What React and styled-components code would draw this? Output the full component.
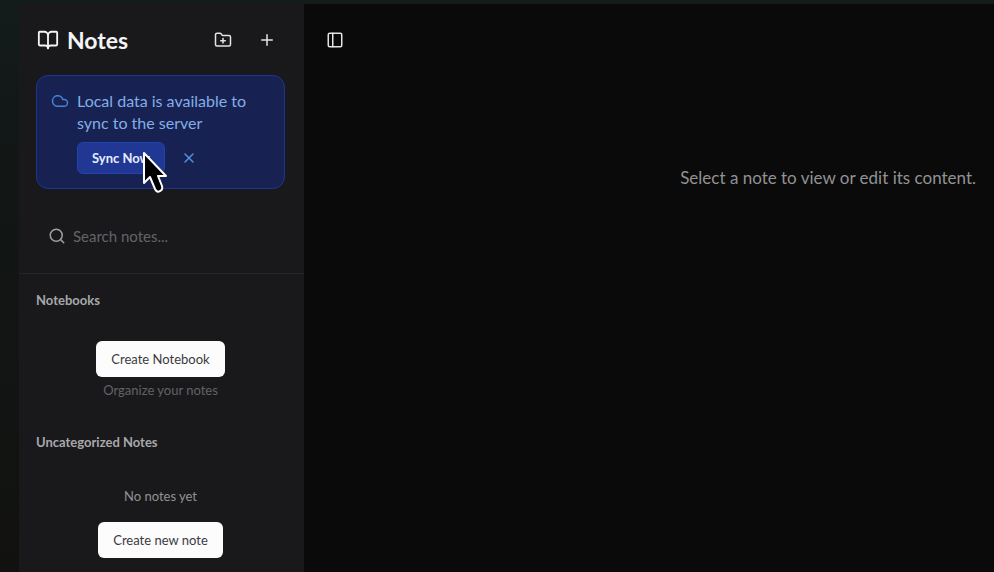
import React from "react";
import styled, { createGlobalStyle } from "styled-components";
import { BookOpen, Cloud, FolderPlus, PanelLeft, Plus, Search, X } from "lucide-react";

const GlobalStyle = createGlobalStyle`
  * {
    box-sizing: border-box;
  }

  body {
    margin: 0;
    background: #121615;
    font-family: Lato, "Liberation Sans", sans-serif;
    color: #f4f4f5;
  }

  button,
  input {
    font-family: inherit;
  }
`;

// --- Page frame ---
const Page = styled.div`
  display: flex;
  min-height: 100vh;
  padding: 4px 0 0 19px;
  background: linear-gradient(180deg, #131b1b 0%, #121615 35%, #111210 100%);
`;

const Sidebar = styled.aside`
  display: flex;
  flex-direction: column;
  flex: 0 0 285px;
  background: #19191b;
`;

const Main = styled.main`
  flex: 1;
  min-width: 0;
  background: #0a0a0a;
`;

// --- Sidebar header ---
const Header = styled.header`
  display: flex;
  align-items: center;
  justify-content: space-between;
  height: 71px;
  padding: 0 21px 0 18px;
`;

const Title = styled.h1`
  display: flex;
  align-items: center;
  gap: 8px;
  margin: 0;
  font-size: 23px;
  line-height: 28px;
  font-weight: 700;
`;

const Actions = styled.div`
  display: flex;
  gap: 12px;
`;

const IconButton = styled.button`
  display: flex;
  align-items: center;
  justify-content: center;
  width: 32px;
  height: 32px;
  padding: 0;
  border: 0;
  border-radius: 6px;
  background: transparent;
  color: ${({ $color }) => $color || "#e4e4e7"};
`;

// --- Sync banner ---
const Banner = styled.section`
  display: flex;
  align-items: flex-start;
  gap: 8px;
  margin: 0 19px 0 17px;
  padding: 14px;
  border: 1px solid #1e3590;
  border-radius: 12px;
  background: #172252;
  color: #4584d6;

  > svg {
    flex: none;
    margin-top: 2px;
  }
`;

const BannerText = styled.p`
  margin: 0;
  font-size: 16px;
  line-height: 22px;
  color: #83aee6;
`;

const BannerActions = styled.div`
  display: flex;
  align-items: center;
  gap: 8px;
  margin-top: 8px;
`;

const SyncButton = styled.button`
  position: relative;
  height: 32px;
  padding: 0 14px;
  border: 1px solid #2143ac;
  border-radius: 6px;
  background: #213794;
  color: #e6eefc;
  font-size: 13px;
  font-weight: 700;
`;

const Pointer = styled.svg`
  position: absolute;
  top: 5px;
  left: 61px;
  overflow: visible;
  pointer-events: none;
`;

// --- Search ---
const SearchBox = styled.label`
  display: flex;
  align-items: center;
  gap: 7px;
  height: 85px;
  padding: 10px 19px 0 29px;
  border-bottom: 1px solid #252527;
  color: #a1a1a5;
`;

const SearchInput = styled.input`
  flex: 1;
  min-width: 0;
  padding: 0;
  border: 0;
  outline: 0;
  background: transparent;
  color: #e4e4e7;
  font-size: 15px;
  line-height: 20px;

  &::placeholder {
    color: #646468;
    opacity: 1;
  }
`;

// --- Note groups ---
const Group = styled.section`
  padding: 17px 19px 0 17px;
`;

const GroupTitle = styled.h2`
  margin: 0;
  font-size: 13px;
  line-height: 18px;
  font-weight: 700;
  color: #a8a8ac;
`;

const GroupBody = styled.div`
  display: flex;
  flex-direction: column;
  align-items: center;
  gap: ${({ $gap }) => $gap};
  padding: ${({ $top }) => $top} 0 16px;
`;

const LightButton = styled.button`
  height: 36px;
  padding: 0 15px;
  border: 0;
  border-radius: 6px;
  background: #fcfcfd;
  color: #3a3a3d;
  font-size: 13px;
`;

const Hint = styled.p`
  margin: 0;
  font-size: 13px;
  line-height: 20px;
  color: ${({ $bright }) => ($bright ? "#929296" : "#626266")};
`;

// --- Main pane ---
const Toolbar = styled.div`
  display: flex;
  align-items: center;
  height: 71px;
  padding: 0 15px;
`;

const EmptyMessage = styled.p`
  margin: 0;
  padding: 91px 18px 0;
  font-size: 17px;
  line-height: 24px;
  text-align: right;
  color: #929294;
`;

export default function App() {
  return (
    <>
      <GlobalStyle />
      <Page>
        <Sidebar>
          <Header>
            <Title>
              <BookOpen size={22} strokeWidth={2} />
              Notes
            </Title>
            <Actions>
              <IconButton aria-label="New notebook">
                <FolderPlus size={18} />
              </IconButton>
              <IconButton aria-label="New note">
                <Plus size={18} />
              </IconButton>
            </Actions>
          </Header>

          <Banner>
            <Cloud size={18} />
            <div>
              <BannerText>Local data is available to sync to the server</BannerText>
              <BannerActions>
                <SyncButton>
                  Sync Now
                  <Pointer width="28" height="44" viewBox="0 0 28 44" aria-hidden="true">
                    <path
                      d="M5 5 V35 L11 29 L16 41 Q18 45 21 43 Q24 42 23 38 L19 28 H27 Z"
                      fill="#000"
                      stroke="#fff"
                      strokeWidth="2"
                      strokeLinejoin="round"
                    />
                  </Pointer>
                </SyncButton>
                <IconButton aria-label="Dismiss" $color="#5593df">
                  <X size={16} />
                </IconButton>
              </BannerActions>
            </div>
          </Banner>

          <SearchBox>
            <Search size={18} />
            <SearchInput type="text" placeholder="Search notes..." aria-label="Search notes" />
          </SearchBox>

          <Group>
            <GroupTitle>Notebooks</GroupTitle>
            <GroupBody $top="32px" $gap="3px">
              <LightButton>Create Notebook</LightButton>
              <Hint>Organize your notes</Hint>
            </GroupBody>
          </Group>

          <Group>
            <GroupTitle>Uncategorized Notes</GroupTitle>
            <GroupBody $top="35px" $gap="16px">
              <Hint $bright>No notes yet</Hint>
              <LightButton>Create new note</LightButton>
            </GroupBody>
          </Group>
        </Sidebar>

        <Main>
          <Toolbar>
            <IconButton aria-label="Toggle sidebar">
              <PanelLeft size={18} />
            </IconButton>
          </Toolbar>
          <EmptyMessage>Select a note to view or edit its content.</EmptyMessage>
        </Main>
      </Page>
    </>
  );
}
